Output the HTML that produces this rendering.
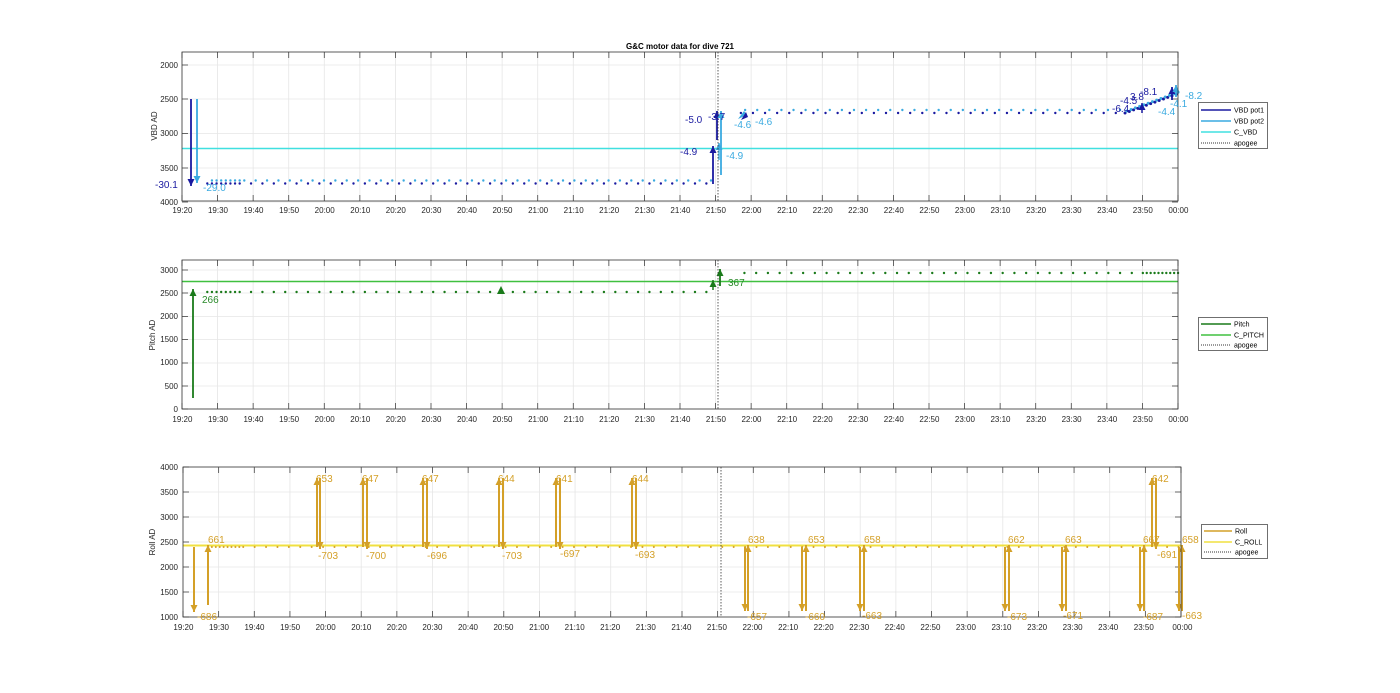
<!DOCTYPE html>
<html><head><meta charset="utf-8"><style>
html,body{margin:0;padding:0;background:#fff;width:1400px;height:693px;overflow:hidden}
svg{display:block;font-family:"Liberation Sans",Arial,sans-serif}
.t{font-size:8px;fill:#262626}
</style></head><body>
<svg id="s" width="1400" height="693" viewBox="0 0 1400 693" xmlns="http://www.w3.org/2000/svg">
<rect width="1400" height="693" fill="#fff"/>
<g id="g1"></g>
<text x="680" y="49" text-anchor="middle" style="font-size:8px;font-weight:bold" fill="#000">G&amp;C motor data for dive 721</text>

<!-- Plot 1 y labels -->
<g class="t" text-anchor="end">
<text x="178" y="68">2000</text><text x="178" y="102">2500</text><text x="178" y="136">3000</text><text x="178" y="171">3500</text><text x="178" y="205">4000</text>
<text x="178" y="273">3000</text><text x="178" y="296">2500</text><text x="178" y="319">2000</text><text x="178" y="342">1500</text><text x="178" y="365">1000</text><text x="178" y="389">500</text><text x="178" y="412">0</text>
<text x="178" y="470">4000</text><text x="178" y="495">3500</text><text x="178" y="520">3000</text><text x="178" y="545">2500</text><text x="178" y="570">2000</text><text x="178" y="595">1500</text><text x="178" y="620">1000</text>
</g>
<text class="t" transform="translate(157,126) rotate(-90)" text-anchor="middle">VBD AD</text>
<text class="t" transform="translate(155,335) rotate(-90)" text-anchor="middle">Pitch AD</text>
<text class="t" transform="translate(155,542) rotate(-90)" text-anchor="middle">Roll AD</text>

<!-- x labels plot1 -->
<g class="t" text-anchor="middle" transform="translate(0,213)">
<text x="182.4">19:20</text><text x="218">19:30</text><text x="253.5">19:40</text><text x="289.1">19:50</text><text x="324.7">20:00</text><text x="360.3">20:10</text><text x="395.8">20:20</text><text x="431.4">20:30</text><text x="467">20:40</text><text x="502.5">20:50</text><text x="538.1">21:00</text><text x="573.7">21:10</text><text x="609.2">21:20</text><text x="644.8">21:30</text><text x="680.4">21:40</text><text x="715.9">21:50</text><text x="751.5">22:00</text><text x="787.1">22:10</text><text x="822.7">22:20</text><text x="858.2">22:30</text><text x="893.8">22:40</text><text x="929.4">22:50</text><text x="964.9">23:00</text><text x="1000.5">23:10</text><text x="1036.1">23:20</text><text x="1071.6">23:30</text><text x="1107.2">23:40</text><text x="1142.8">23:50</text><text x="1178.4">00:00</text>
</g>
<g class="t" text-anchor="middle" transform="translate(0,422)">
<text x="182.4">19:20</text><text x="218">19:30</text><text x="253.5">19:40</text><text x="289.1">19:50</text><text x="324.7">20:00</text><text x="360.3">20:10</text><text x="395.8">20:20</text><text x="431.4">20:30</text><text x="467">20:40</text><text x="502.5">20:50</text><text x="538.1">21:00</text><text x="573.7">21:10</text><text x="609.2">21:20</text><text x="644.8">21:30</text><text x="680.4">21:40</text><text x="715.9">21:50</text><text x="751.5">22:00</text><text x="787.1">22:10</text><text x="822.7">22:20</text><text x="858.2">22:30</text><text x="893.8">22:40</text><text x="929.4">22:50</text><text x="964.9">23:00</text><text x="1000.5">23:10</text><text x="1036.1">23:20</text><text x="1071.6">23:30</text><text x="1107.2">23:40</text><text x="1142.8">23:50</text><text x="1178.4">00:00</text>
</g>
<g class="t" text-anchor="middle" transform="translate(1,630)">
<text x="182.4">19:20</text><text x="218">19:30</text><text x="253.5">19:40</text><text x="289.1">19:50</text><text x="324.7">20:00</text><text x="360.3">20:10</text><text x="395.8">20:20</text><text x="431.4">20:30</text><text x="467">20:40</text><text x="502.5">20:50</text><text x="538.1">21:00</text><text x="573.7">21:10</text><text x="609.2">21:20</text><text x="644.8">21:30</text><text x="680.4">21:40</text><text x="715.9">21:50</text><text x="751.5">22:00</text><text x="787.1">22:10</text><text x="822.7">22:20</text><text x="858.2">22:30</text><text x="893.8">22:40</text><text x="929.4">22:50</text><text x="964.9">23:00</text><text x="1000.5">23:10</text><text x="1036.1">23:20</text><text x="1071.6">23:30</text><text x="1107.2">23:40</text><text x="1142.8">23:50</text><text x="1181.4">00:00</text>
</g>

<!-- annotations plot1 -->
<g style="font-size:10px">
<text x="155" y="188" fill="#1a1aa0">-30.1</text>
<text x="203" y="191" fill="#3aaae0">-29.0</text>
<text x="685" y="123" fill="#1a1aa0">-5.0</text>
<text x="708" y="120" fill="#1a1aa0">-3.7</text>
<text x="680" y="155" fill="#1a1aa0">-4.9</text>
<text x="726" y="159" fill="#3aaae0">-4.9</text>
<text x="734" y="128" fill="#3aaae0">-4.6</text>
<text x="755" y="125" fill="#3aaae0">-4.6</text>
<text x="1112" y="112" fill="#1a1aa0">-6.4</text>
<text x="1120" y="104" fill="#1a1aa0">-4.5</text>
<text x="1130" y="100" fill="#1a1aa0">3.8</text>
<text x="1140" y="95" fill="#1a1aa0">-8.1</text>
<text x="1158" y="115" fill="#3aaae0">-4.4</text>
<text x="1170" y="107" fill="#3aaae0">-4.1</text>
<text x="1185" y="99" fill="#3aaae0">-8.2</text>
</g>
<g style="font-size:10px" fill="#2a8a2a">
<text x="202" y="303">266</text>
<text x="728" y="286">367</text>
</g>
<g style="font-size:10px" fill="#d4a028">
<text x="208" y="543">661</text><text x="197" y="620">-686</text>
<text x="316" y="482">653</text><text x="318" y="559">-703</text>
<text x="362" y="482">647</text><text x="366" y="559">-700</text>
<text x="422" y="482">647</text><text x="427" y="559">-696</text>
<text x="498" y="482">644</text><text x="502" y="559">-703</text>
<text x="556" y="482">641</text><text x="560" y="557">-697</text>
<text x="632" y="482">644</text><text x="635" y="558">-693</text>
<text x="748" y="543">638</text><text x="747" y="620">-657</text>
<text x="808" y="543">653</text><text x="805" y="620">-660</text>
<text x="864" y="543">658</text><text x="862" y="619">-663</text>
<text x="1008" y="543">662</text><text x="1007" y="620">-673</text>
<text x="1065" y="543">663</text><text x="1063" y="619">-671</text>
<text x="1143" y="543">667</text><text x="1143" y="620">-687</text>
<text x="1152" y="482">642</text><text x="1157" y="558">-691</text>
<text x="1182" y="543">658</text><text x="1182" y="619">-663</text>
</g>

<!-- legends -->
<g style="font-size:7px" fill="#000">
<rect x="1198.5" y="102.5" width="69" height="46" fill="#fff" stroke="#333" stroke-width="0.7"/>
<line x1="1201" y1="110" x2="1231" y2="110" stroke="#1a1aa0" stroke-width="1.5"/><text x="1234" y="112.5">VBD pot1</text>
<line x1="1201" y1="121" x2="1231" y2="121" stroke="#3aaae0" stroke-width="1.5"/><text x="1234" y="123.5">VBD pot2</text>
<line x1="1201" y1="132" x2="1231" y2="132" stroke="#40e0e0" stroke-width="1.5"/><text x="1234" y="134.5">C_VBD</text>
<line x1="1201" y1="143" x2="1231" y2="143" stroke="#333" stroke-dasharray="1,1"/><text x="1234" y="145.5">apogee</text>

<rect x="1198.5" y="317.5" width="69" height="33" fill="#fff" stroke="#333" stroke-width="0.7"/>
<line x1="1201" y1="324" x2="1231" y2="324" stroke="#1a7a1a" stroke-width="1.5"/><text x="1234" y="326.5">Pitch</text>
<line x1="1201" y1="335" x2="1231" y2="335" stroke="#40c040" stroke-width="1.5"/><text x="1234" y="337.5">C_PITCH</text>
<line x1="1201" y1="345" x2="1231" y2="345" stroke="#333" stroke-dasharray="1,1"/><text x="1234" y="347.5">apogee</text>

<rect x="1201.5" y="524.5" width="66" height="34" fill="#fff" stroke="#333" stroke-width="0.7"/>
<line x1="1204" y1="531" x2="1232" y2="531" stroke="#d4a028" stroke-width="1.5"/><text x="1235" y="533.5">Roll</text>
<line x1="1204" y1="542" x2="1232" y2="542" stroke="#f0e040" stroke-width="1.5"/><text x="1235" y="544.5">C_ROLL</text>
<line x1="1204" y1="552" x2="1232" y2="552" stroke="#333" stroke-dasharray="1,1"/><text x="1235" y="554.5">apogee</text>
</g>
</svg>
<script>
(function(){
var NS="http://www.w3.org/2000/svg",g=document.getElementById('g1');
function el(n,a){var e=document.createElementNS(NS,n);for(var k in a)e.setAttribute(k,a[k]);g.appendChild(e);return e;}
function axes(x0,x1,y0,y1,yt){
 el('rect',{x:x0,y:y0,width:x1-x0,height:y1-y0,fill:'#fff'});
 for(var k=0;k<=28;k++){var x=x0+(x1-x0)*k/28;
  el('line',{x1:x,y1:y0,x2:x,y2:y1,stroke:'#e6e6e6','stroke-width':0.8});
  el('line',{x1:x,y1:y1,x2:x,y2:y1-6,stroke:'#444','stroke-width':0.8});
  el('line',{x1:x,y1:y0,x2:x,y2:y0+6,stroke:'#444','stroke-width':0.8});}
 yt.forEach(function(y){el('line',{x1:x0,y1:y,x2:x1,y2:y,stroke:'#e6e6e6','stroke-width':0.8});
  el('line',{x1:x0,y1:y,x2:x0+6,y2:y,stroke:'#444','stroke-width':0.8});
  el('line',{x1:x1,y1:y,x2:x1-6,y2:y,stroke:'#444','stroke-width':0.8});});
}
function frame(x0,x1,y0,y1){el('rect',{x:x0,y:y0,width:x1-x0,height:y1-y0,fill:'none',stroke:'#333','stroke-width':0.8});}
function arrow(x,ya,yb,c,w){el('line',{x1:x,y1:ya,x2:x,y2:yb,stroke:c,'stroke-width':w||2});
 var d=yb>ya?1:-1;el('polygon',{points:(x-3.5)+','+(yb-d*7)+' '+(x+3.5)+','+(yb-d*7)+' '+x+','+yb,fill:c});}
function dot(x,y,c,r){el('circle',{cx:x,cy:y,r:r||1.2,fill:c});}
// Plot1
var X=function(m){return 182.4+996*m/280;}; // minutes from 19:20
axes(182,1178,52,201,[65,99,133.5,168,202]);
el('line',{x1:182,y1:148.5,x2:1178,y2:148.5,stroke:'#40e0e0','stroke-width':1.4});
var B='#1a1aa0',L='#3aaae0';
for(var m=7;m<=150;m+=(m<16?1.3:3.2)){dot(X(m),183.5,B);dot(X(m+1.3),180.5,L);}
for(var m=157;m<265;m+=3.4){dot(X(m),113,B);dot(X(m+1.2),110,L);}
for(var m=265;m<280;m+=1.2){dot(X(m),113-(m-265)*1.3,B,1.5);dot(X(m+0.5),111-(m-265)*1.3,L,1.5);}
arrow(191,99,186,B,1.8);arrow(197,99,183,L,1.8);
arrow(713,184,146,B,1.8);arrow(717,140,111,B,1.8);arrow(721,175,111,L,1.8);arrow(719,160,143,L,1.4);
el('polygon',{points:'738,119 744,111 747,115',fill:L});el('polygon',{points:'741,120 746,112 748,117',fill:B});
arrow(1142,113,103,B,1.5);arrow(1172,100,87,B,1.8);arrow(1176,97,85,L,1.8);
// Plot2
axes(182,1178,260,409,[270,293,316.5,339.5,363,386,409]);
el('line',{x1:182,y1:281.5,x2:1178,y2:281.5,stroke:'#40c040','stroke-width':1.4});
var G='#1a7a1a';
for(var m=7;m<=150;m+=(m<16?1.3:3.2)){dot(X(m),292,G);}
for(var m=158;m<270;m+=3.3){dot(X(m),273,G);}
for(var m=270;m<280;m+=1.1){dot(X(m),273,G);}
arrow(193,398,289,G,1.8);arrow(713,290,280,G,1.5);arrow(720,286,269,G,1.8);
el('polygon',{points:'497,294 501,286 505,294',fill:G});
// Plot3
axes(183,1181,467,617,[467,492,517,542,567,592,617]);
el('line',{x1:183,y1:545.5,x2:1181,y2:545.5,stroke:'#f0e040','stroke-width':2});
var Y='#d4a028';
for(var m=7;m<=280;m+=(m<16?1.1:3.2)){dot(183+998*m/280,547,Y,1);}
arrow(194,547,612,Y,2);arrow(208,605,545,Y,2);
[[317,320],[363,367],[423,427],[499,503],[556,560],[632,636],[1152,1156]].forEach(function(p){arrow(p[0],547,478,Y,2);arrow(p[1],478,549,Y,2);});
[[745,748],[802,806],[860,864],[1005,1009],[1062,1066],[1140,1144],[1179,1182]].forEach(function(p){arrow(p[0],547,611,Y,2);arrow(p[1],611,545,Y,2);});
frame(182,1178,52,201);frame(182,1178,260,409);frame(183,1181,467,617);
el('line',{x1:718,y1:52,x2:718,y2:201,stroke:'#333','stroke-dasharray':'1.5,1.5','stroke-width':0.8});
el('line',{x1:718,y1:260,x2:718,y2:409,stroke:'#333','stroke-dasharray':'1.5,1.5','stroke-width':0.8});
el('line',{x1:721,y1:467,x2:721,y2:617,stroke:'#333','stroke-dasharray':'1.5,1.5','stroke-width':0.8});
})();
</script>
</body></html>
